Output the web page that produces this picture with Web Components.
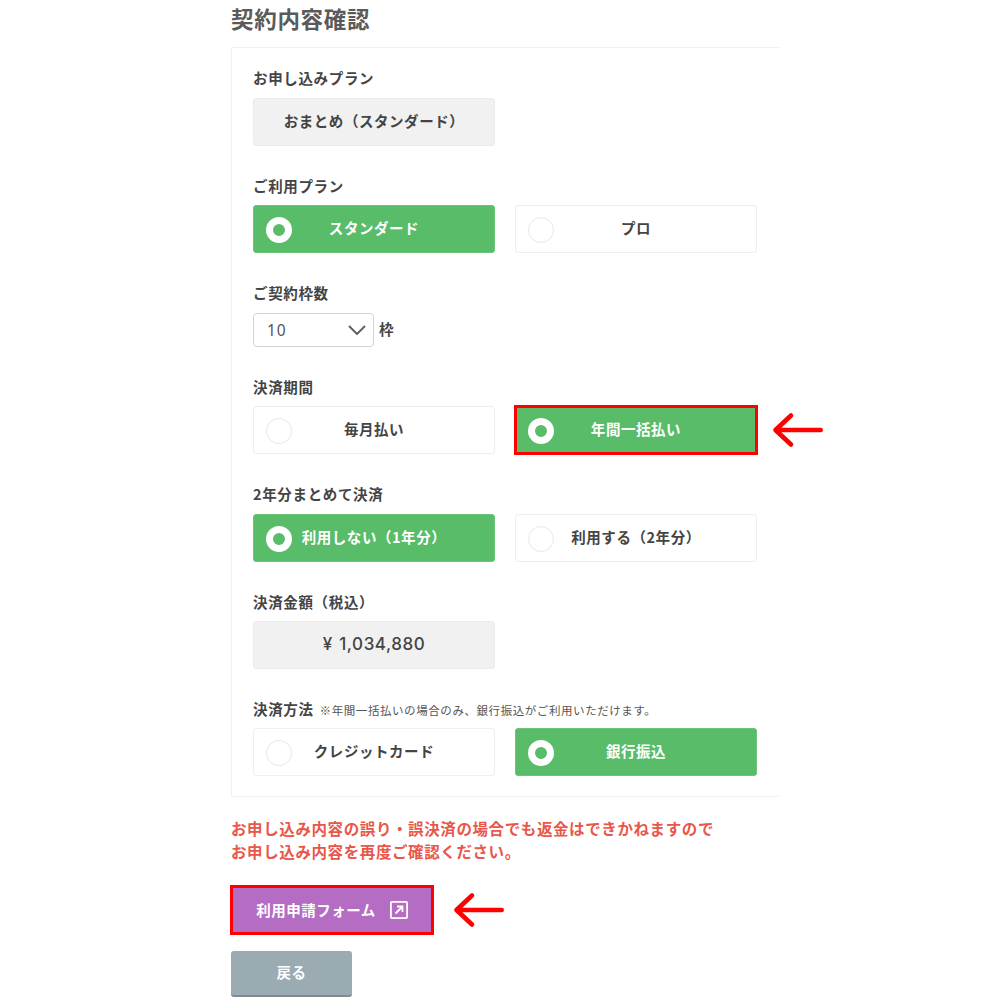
<!DOCTYPE html>
<html lang="ja"><head><meta charset="utf-8"><title>契約内容確認</title>
<style>
html,body{margin:0;padding:0;background:#fff;overflow:hidden;height:1000px}
body{font-family:"Noto Sans CJK JP","Noto Sans",sans-serif;color:#444}
</style></head><body>
<x-page>
  <x-card>
    <x-field label="お申し込みプラン"><x-static>おまとめ（スタンダード）</x-static></x-field>
    <x-field label="ご利用プラン"><x-choices><x-choice checked>スタンダード</x-choice><x-choice>プロ</x-choice></x-choices></x-field>
    <x-field label="ご契約枠数"><x-select value="10" unit="枠"></x-select></x-field>
    <x-field label="決済期間"><x-choices><x-choice>毎月払い</x-choice><x-choice checked marked>年間一括払い</x-choice></x-choices></x-field>
    <x-field label="2年分まとめて決済"><x-choices><x-choice checked>利用しない（1年分）</x-choice><x-choice>利用する（2年分）</x-choice></x-choices></x-field>
    <x-field label="決済金額（税込）"><x-static price>¥ 1,034,880</x-static></x-field>
    <x-field label="決済方法" note="※年間一括払いの場合のみ、銀行振込がご利用いただけます。" last><x-choices><x-choice>クレジットカード</x-choice><x-choice checked>銀行振込</x-choice></x-choices></x-field>
  </x-card>
  <x-warning>お申し込み内容の誤り・誤決済の場合でも返金はできかねますので<br>お申し込み内容を再度ご確認ください。</x-warning>
  <x-apply>利用申請フォーム</x-apply>
  <x-back>戻る</x-back>
</x-page>
<script>
const ARROW='<svg width="52" height="36" viewBox="0 0 52 36" fill="none" stroke="#f00" stroke-width="4.6" stroke-linecap="round" stroke-linejoin="round"><path d="M49.7 18H4.5M20 3.5 4.5 18 20 32.5"/></svg>';
function def(name,html,init){
  customElements.define(name,class extends HTMLElement{
    constructor(){super();this.attachShadow({mode:'open'}).innerHTML=html;}
    connectedCallback(){if(init)init(this,this.shadowRoot);}
  });
}
def('x-page',`<style>
:host{display:block;width:548px;margin-left:231px}
h1{margin:0;height:47px;font-size:22.5px;line-height:37px;font-weight:700;color:#5a5a5a;letter-spacing:.7px;white-space:nowrap}
</style><h1>契約内容確認</h1><slot></slot>`);
def('x-card',`<style>
:host{display:block;box-sizing:border-box;height:750px;border:1px solid #f0f0f0;border-right:0;border-radius:2px 0 0 2px;padding:20.2px 0 0 21px}
</style><slot></slot>`);
def('x-field',`<style>
:host{display:block;margin-bottom:30px}
:host([last]){margin-bottom:0}
.l{display:flex;align-items:baseline;height:20px;line-height:19px;margin-bottom:9.5px;font-size:14.5px;font-weight:700;letter-spacing:.65px;color:#444;white-space:nowrap}
:host([last]) .l{margin-bottom:9px}
.n{font-size:11.5px;font-weight:400;letter-spacing:.57px;margin-left:6px;color:#555}
</style><div class="l"><span id="t"></span><span class="n" id="n"></span></div><slot></slot>`,(h,s)=>{
  s.getElementById('t').textContent=h.getAttribute('label');
  s.getElementById('n').textContent=h.getAttribute('note')||'';
});
def('x-static',`<style>
:host{display:flex;align-items:center;justify-content:center;box-sizing:border-box;width:242px;height:48px;padding-bottom:3px;background:#f1f1f1;border:1px solid #ebebeb;border-radius:3px;font-size:14.5px;font-weight:700;letter-spacing:.55px;color:#444;white-space:nowrap}
:host([price]){font-size:17px;font-weight:500;letter-spacing:.55px;word-spacing:1.5px;padding-bottom:2px;font-family:"Inter",sans-serif}
</style><slot></slot>`);
def('x-choices',`<style>:host{display:flex;gap:20px}</style><slot></slot>`);
def('x-choice',`<style>
:host{position:relative;display:grid;grid-template-columns:26px 1fr 26px;align-items:center;box-sizing:border-box;width:242px;height:48px;padding:0 12px 3px;background:#fff;border:1px solid #eee;border-radius:3px;font-size:14.5px;font-weight:700;letter-spacing:.55px;color:#444;white-space:nowrap;text-align:center}
:host([checked]){background:#59bc69;border-color:#6cc47a;color:#fff}
:host([marked]){outline:3px solid #f00;outline-offset:-2px;border-radius:0}
.r{box-sizing:border-box;width:26px;height:26px;margin-top:5px;border-radius:50%;border:1.5px solid #e8e8e8;background:#fff}
:host([checked]) .r{border:7.5px solid #fff;background:#59bc69}
.a{display:none;position:absolute;left:calc(100% + 15px);top:50%;transform:translateY(-50%);line-height:0}
:host([marked]) .a{display:block}
</style><span class="r"></span><span><slot></slot></span><span></span><span class="a">${ARROW}</span>`);
def('x-select',`<style>
:host{display:flex;align-items:center;gap:5px;height:34px}
.s{display:flex;align-items:center;justify-content:space-between;box-sizing:border-box;width:121px;height:34px;padding:0 7px 0 13px;border:1.5px solid #d4d4d4;border-radius:4px;background:#fff;font-family:"Noto Sans",sans-serif;font-size:15.5px;letter-spacing:1px;color:#555}
.u{font-size:14.5px;font-weight:700;color:#444;padding-bottom:3px}
svg{display:block}
</style><div class="s"><span id="v"></span><svg width="18" height="10" viewBox="0 0 18 10" fill="none" stroke="#5f5f5f" stroke-width="1.9"><path d="M1 1l8 8 8-8"/></svg></div><span class="u" id="u"></span>`,(h,s)=>{
  s.getElementById('v').textContent=h.getAttribute('value');
  s.getElementById('u').textContent=h.getAttribute('unit');
});
def('x-warning',`<style>
:host{display:block;margin-top:20px;font-size:15.5px;line-height:23px;font-weight:700;letter-spacing:.6px;color:#e8574a;white-space:nowrap}
</style><slot></slot>`);
def('x-apply',`<style>
:host{position:relative;display:flex;align-items:center;justify-content:center;gap:14px;box-sizing:border-box;width:202px;height:48px;margin-top:23px;padding-bottom:2px;background:#b56cc3;outline:3px solid #f00;outline-offset:-2px;font-size:14.5px;font-weight:700;letter-spacing:.5px;color:#fff;white-space:nowrap}
svg.i{display:block;margin-top:2px}
.a{position:absolute;left:calc(100% + 19px);top:50%;transform:translateY(-50%);line-height:0}
</style><slot></slot><svg class="i" width="18" height="18" viewBox="0 0 18 18" fill="none" stroke="#fff" stroke-width="1.8"><rect x=".9" y=".9" width="16.2" height="16.2" rx="1"/><path d="M5.5 12.5 12.5 5.5M7 5.5h5.5V11"/></svg><span class="a">${ARROW}</span>`);
def('x-back',`<style>
:host{display:flex;align-items:center;justify-content:center;box-sizing:border-box;width:121px;height:46px;margin-top:17px;padding-bottom:3px;background:#9aabb2;border-bottom:2px solid #85898b;border-radius:3px;font-size:14.5px;font-weight:700;letter-spacing:.5px;color:#fff}
</style><slot></slot>`);
</script>
</body></html>
